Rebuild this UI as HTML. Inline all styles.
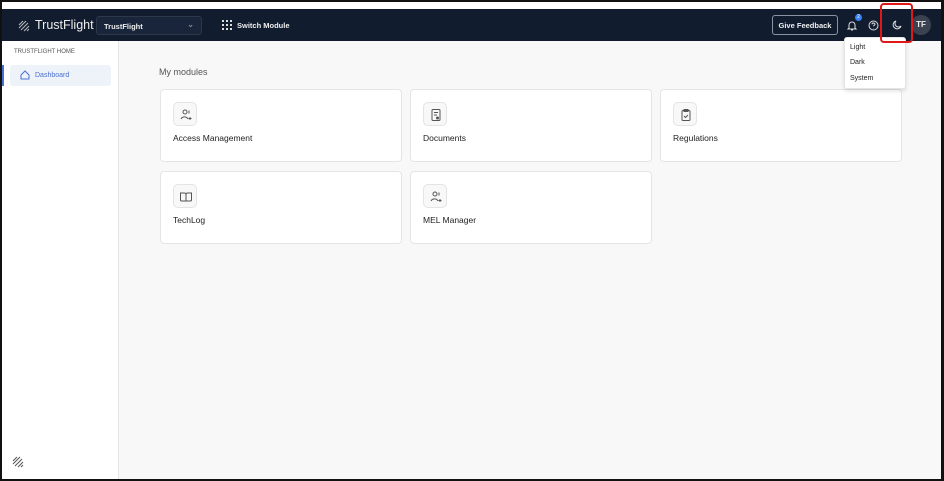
<!DOCTYPE html>
<html><head><style>
*{box-sizing:border-box;margin:0;padding:0}
body{width:944px;height:481px;overflow:hidden;background:#fff;font-family:"Liberation Sans",sans-serif;position:relative}
.frame{position:absolute;left:0;top:0;width:944px;height:481px;border:2px solid #111;border-right-width:3px;z-index:10;pointer-events:none}
.nav{position:absolute;left:2px;top:9px;width:939px;height:32px;background:#111d2f}
.side{position:absolute;left:2px;top:41px;width:117px;height:438px;background:#fff;border-right:1px solid #e6e6e6}
.main{position:absolute;left:119px;top:41px;width:822px;height:438px;background:#f8f8f8}
.card{position:absolute;width:242px;height:73px;background:#fff;border:1px solid #e5e5e5;border-radius:4px}
.ic{position:absolute;left:12px;top:12px;width:24px;height:24px;border:1px solid #e4e4e4;border-radius:5px;background:#f8f8f8}
.ic svg{position:absolute;left:5px;top:5px}
.card span{position:absolute;left:12px;top:43px;font-size:8.5px;color:#222}
</style></head><body>
<div class="nav">
 <svg style="position:absolute;left:15px;top:10px" width="14" height="14" viewBox="0 0 14 14" stroke="#bbb" stroke-width="1"><path d="M2 6l4-4M2 9l7-7M4 11l7-7M7 12l5-5M10 12l2-2"/></svg>
 <div style="position:absolute;left:33px;top:9px;color:#eee;font-size:12.5px">TrustFlight</div>
 <div style="position:absolute;left:94px;top:7px;width:106px;height:19px;border:1px solid #2c3748;border-radius:3px;background:#18253a;color:#eee;font-size:7.5px;font-weight:bold;padding:5px 7px">TrustFlight<span style="position:absolute;right:7px;top:3px;color:#888;font-size:8px">⌄</span></div>
 <svg style="position:absolute;left:220px;top:11px" width="10" height="10" fill="#ddd"><g><rect x="0" y="0" width="2" height="2"/><rect x="4" y="0" width="2" height="2"/><rect x="8" y="0" width="2" height="2"/><rect x="0" y="4" width="2" height="2"/><rect x="4" y="4" width="2" height="2"/><rect x="8" y="4" width="2" height="2"/><rect x="0" y="8" width="2" height="2"/><rect x="4" y="8" width="2" height="2"/><rect x="8" y="8" width="2" height="2"/></g></svg>
 <div style="position:absolute;left:235px;top:12px;color:#eee;font-size:7.5px;font-weight:bold">Switch Module</div>
 <div style="position:absolute;left:770px;top:6px;width:66px;height:20px;border:1px solid #8a93a0;border-radius:3px;color:#eee;font-size:7.5px;font-weight:bold;text-align:center;line-height:19px">Give Feedback</div>
 <svg style="position:absolute;left:845px;top:11px" width="10" height="11" viewBox="0 0 10 11" fill="none" stroke="#ddd" stroke-width="1"><path d="M2 8V5a3 3 0 016 0v3l1 1H1z M4 10h2"/></svg>
 <div style="position:absolute;left:853px;top:5px;width:7px;height:7px;border-radius:50%;background:#3b82f6;color:#fff;font-size:5px;text-align:center;line-height:7px">2</div>
 <svg style="position:absolute;left:866px;top:11px" width="11" height="11" viewBox="0 0 11 11" fill="none" stroke="#ddd" stroke-width="1"><circle cx="5.5" cy="5.5" r="4.5"/><path d="M4 4.3a1.5 1.5 0 113 .3c-.5.6-1.5.8-1.5 1.6M5.5 8v.3"/></svg>
 <svg style="position:absolute;left:890px;top:11px" width="10" height="10" viewBox="0 0 10 10" fill="none" stroke="#ddd" stroke-width="1"><path d="M4 1a4 4 0 105 5A3.5 3.5 0 014 1z"/></svg>
 <div style="position:absolute;left:909px;top:6px;width:20px;height:20px;border-radius:50%;background:#3a4250;color:#eee;font-size:8px;font-weight:bold;text-align:center;line-height:20px">TF</div>
</div>
<div class="side">
 <div style="position:absolute;left:12px;top:8px;font-size:6px;color:#555">TRUSTFLIGHT HOME</div>
 <div style="position:absolute;left:8px;top:24px;width:101px;height:21px;background:#eef3fa;border-radius:3px"></div>
 <div style="position:absolute;left:0;top:24px;width:2px;height:21px;background:#4a6fd0"></div>
 <svg style="position:absolute;left:18px;top:29px" width="10" height="10" viewBox="0 0 10 10" fill="none" stroke="#4a6fd0" stroke-width="1"><path d="M1 5l4-4 4 4v4H1z"/></svg>
 <div style="position:absolute;left:33px;top:31px;font-size:7px;color:#4a6fd0">Dashboard</div>
 <svg style="position:absolute;left:9px;top:414px" width="14" height="14" viewBox="0 0 14 14" stroke="#555" stroke-width="1"><path d="M2 6l4-4M2 9l7-7M4 11l7-7M7 12l5-5M10 12l2-2"/></svg>
</div>
<div class="main">
 <div style="position:absolute;left:40px;top:26px;font-size:9px;color:#555">My modules</div>
</div>
<div class="card" style="left:160px;top:89px"><div class="ic"><svg width="14" height="14" viewBox="0 0 14 14" fill="none" stroke="#555" stroke-width="1"><circle cx="6" cy="4" r="2"/><path d="M2 11a4 4 0 017 0M10 2.5v3M11 9v3M9.5 10.5h3"/></svg></div><span>Access Management</span></div>
<div class="card" style="left:410px;top:89px"><div class="ic"><svg width="14" height="14" viewBox="0 0 14 14" fill="none" stroke="#555" stroke-width="1"><rect x="3" y="1.5" width="8" height="11" rx="1"/><path d="M5 4.5h4M5 7h3"/><circle cx="8.5" cy="10" r="1" fill="#555"/></svg></div><span>Documents</span></div>
<div class="card" style="left:660px;top:89px"><div class="ic"><svg width="14" height="14" viewBox="0 0 14 14" fill="none" stroke="#555" stroke-width="1"><rect x="3" y="2.5" width="8" height="10" rx="1"/><rect x="5" y="1.5" width="4" height="2"/><path d="M5 8l1.5 1.5L9 7"/></svg></div><span>Regulations</span></div>
<div class="card" style="left:160px;top:171px"><div class="ic"><svg width="14" height="14" viewBox="0 0 14 14" fill="none" stroke="#555" stroke-width="1"><path d="M1.5 3h4a1.5 1.5 0 011.5 1.5V11H2.5a1 1 0 01-1-1zM12.5 3h-4A1.5 1.5 0 007 4.5V11h4.5a1 1 0 001-1z"/></svg></div><span>TechLog</span></div>
<div class="card" style="left:410px;top:171px"><div class="ic"><svg width="14" height="14" viewBox="0 0 14 14" fill="none" stroke="#555" stroke-width="1"><circle cx="6" cy="4" r="2"/><path d="M2 11a4 4 0 017 0M10 2.5v3M11 9v3M9.5 10.5h3"/></svg></div><span>MEL Manager</span></div>
<div style="position:absolute;left:844px;top:37px;width:62px;height:52px;background:#fff;border:1px solid #e5e5e5;border-radius:3px;box-shadow:0 2px 4px rgba(0,0,0,.12);font-size:7px;color:#222">
 <div style="position:absolute;left:5px;top:6px">Light</div>
 <div style="position:absolute;left:5px;top:21px">Dark</div>
 <div style="position:absolute;left:5px;top:37px">System</div>
</div>
<div style="position:absolute;left:880px;top:3px;width:33px;height:40px;border:2px solid #e01818;border-radius:4px;z-index:5"></div>
<div class="frame"></div>
</body></html>
